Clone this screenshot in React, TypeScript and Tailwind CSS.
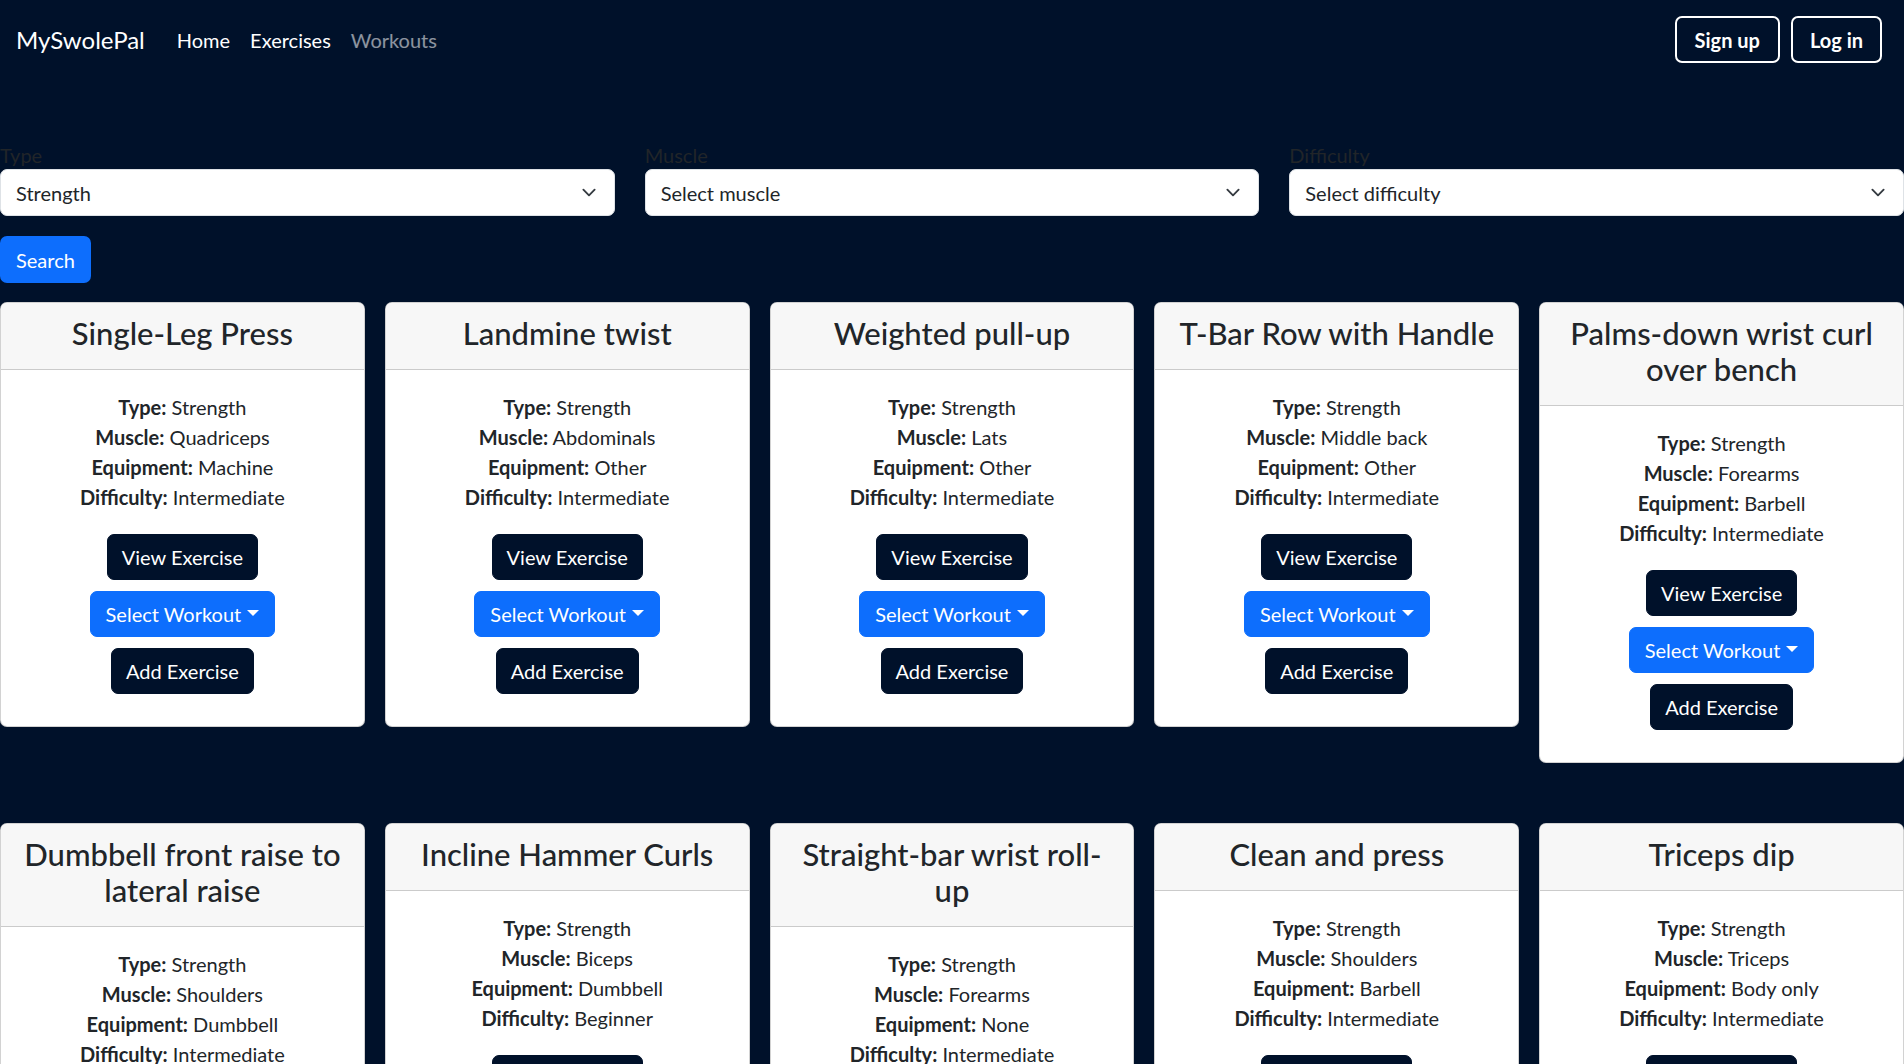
import React from "react";

type Ex = { name: string; type: string; muscle: string; equipment: string; difficulty: string };

const exercises: Ex[] = [
  { name: "Single-Leg Press", type: "Strength", muscle: "Quadriceps", equipment: "Machine", difficulty: "Intermediate" },
  { name: "Landmine twist", type: "Strength", muscle: "Abdominals", equipment: "Other", difficulty: "Intermediate" },
  { name: "Weighted pull-up", type: "Strength", muscle: "Lats", equipment: "Other", difficulty: "Intermediate" },
  { name: "T-Bar Row with Handle", type: "Strength", muscle: "Middle back", equipment: "Other", difficulty: "Intermediate" },
  { name: "Palms-down wrist curl over bench", type: "Strength", muscle: "Forearms", equipment: "Barbell", difficulty: "Intermediate" },
  { name: "Dumbbell front raise to lateral raise", type: "Strength", muscle: "Shoulders", equipment: "Dumbbell", difficulty: "Intermediate" },
  { name: "Incline Hammer Curls", type: "Strength", muscle: "Biceps", equipment: "Dumbbell", difficulty: "Beginner" },
  { name: "Straight-bar wrist roll-up", type: "Strength", muscle: "Forearms", equipment: "None", difficulty: "Intermediate" },
  { name: "Clean and press", type: "Strength", muscle: "Shoulders", equipment: "Barbell", difficulty: "Intermediate" },
  { name: "Triceps dip", type: "Strength", muscle: "Triceps", equipment: "Body only", difficulty: "Intermediate" },
];

function Chevron() {
  return (
    <svg width="20" height="15" viewBox="0 0 16 16" className="shrink-0">
      <path d="m2 5 6 6 6-6" fill="none" stroke="#343a40" strokeWidth="2" strokeLinecap="round" strokeLinejoin="round" />
    </svg>
  );
}

function SelectBox({ label, value }: { label: string; value: string }) {
  return (
    <div className="flex flex-col">
      <label className="block text-[20px] leading-[26px] text-[#212529] mb-px">{label}</label>
      <div className="h-[47px] bg-white rounded-[7px] border border-[#dee2e6] flex items-center justify-between pl-[15px] pr-[15px] text-[20px] text-[#212529]">
        <span>{value}</span>
        <Chevron />
      </div>
    </div>
  );
}

function Card({ ex }: { ex: Ex }) {
  return (
    <div className="bg-white rounded-[7px] border border-black/[0.175] overflow-hidden">
      <div className="bg-[#f7f7f7] border-b border-black/[0.175] px-4 pt-[12px] pb-[10px]">
        <h4 className="text-[31px] leading-[36px] font-medium text-[#212529] text-center mb-[8px]">{ex.name}</h4>
      </div>
      <div className="p-5 text-center text-[#212529] text-[20px]">
        <p className="leading-[30px] mb-[22px] mt-[2px]">
          <b className="font-bold">Type:</b> {ex.type}
          <br />
          <b className="font-bold">Muscle:</b> {ex.muscle}
          <br />
          <b className="font-bold">Equipment:</b> {ex.equipment}
          <br />
          <b className="font-bold">Difficulty:</b> {ex.difficulty}
        </p>
        <div className="flex flex-col items-center gap-[11px]">
          <button className="bg-[#00112a] text-white text-[20px] leading-[30px] px-[14px] py-[7px] rounded-[7px] border border-[#00112a]">
            View Exercise
          </button>
          <button className="bg-[#0d6efd] text-white text-[20px] leading-[30px] px-[15px] py-[7px] rounded-[7px] border border-[#0d6efd] flex items-center">
            Select Workout
            <span className="ml-[6px] inline-block w-0 h-0 border-l-[6px] border-r-[6px] border-t-[6px] border-l-transparent border-r-transparent border-t-white mb-[3px]" />
          </button>
          <button className="bg-[#00112a] text-white text-[20px] leading-[30px] px-[14px] py-[7px] rounded-[7px] border border-[#00112a] mb-[12px]">
            Add Exercise
          </button>
        </div>
      </div>
    </div>
  );
}

export default function App() {
  return (
    <div className="min-h-screen bg-[#00112a] font-['Lato','Noto_Sans',sans-serif]">
      <nav className="flex items-center justify-between pl-4 pr-[22px] pt-4 pb-4">
        <div className="flex items-center">
          <span className="text-white text-[24px] leading-[30px] mr-[22px]">MySwolePal</span>
          <a className="text-white text-[20px] leading-[30px] px-[10px]">Home</a>
          <a className="text-white text-[20px] leading-[30px] px-[10px]">Exercises</a>
          <a className="text-white/55 text-[20px] leading-[30px] px-[10px]">Workouts</a>
        </div>
        <div className="flex items-center gap-[11px]">
          <button className="h-[47px] px-[18px] border-2 border-white rounded-[7px] text-white font-bold text-[20px]">Sign up</button>
          <button className="h-[47px] px-[17px] border-2 border-white rounded-[7px] text-white font-bold text-[20px]">Log in</button>
        </div>
      </nav>
      <div className="mt-[63px]">
        <div className="grid grid-cols-3 gap-x-[30px]">
          <SelectBox label="Type" value="Strength" />
          <SelectBox label="Muscle" value="Select muscle" />
          <SelectBox label="Difficulty" value="Select difficulty" />
        </div>
        <button className="mt-5 h-[47px] px-[16px] bg-[#0d6efd] text-white text-[20px] rounded-[7px]">Search</button>
        <div className="mt-[19px] grid grid-cols-5 gap-x-5 gap-y-[60px] items-start">
          {exercises.map((ex) => (
            <Card key={ex.name} ex={ex} />
          ))}
        </div>
      </div>
    </div>
  );
}
